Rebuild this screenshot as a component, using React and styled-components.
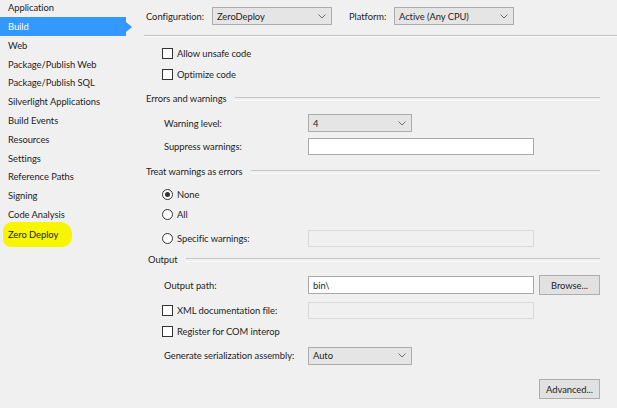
import React from "react";
import styled, { createGlobalStyle } from "styled-components";

const Global = createGlobalStyle`
  html, body { margin: 0; padding: 0; background: #ffffff; }
  body { font-family: "Segoe UI", Lato, "Liberation Sans", sans-serif; font-size: 9.4px; letter-spacing: -0.05px; color: #1e1e1e; }
  * { box-sizing: border-box; }
`;

const Page = styled.div`
  width: 617px;
  height: 414px;
  display: flex;
  flex-direction: column;
  background: #ffffff;
  overflow: hidden;
`;

const Body = styled.div`
  height: 408px;
  display: flex;
  background: #f0f0f0;
`;

const Sidebar = styled.nav`
  width: 133px;
  flex: none;
  display: flex;
  flex-direction: column;
  margin-top: -1.6px;
`;

const NavItem = styled.div`
  position: relative;
  height: 18.8px;
  width: 126px;
  display: flex;
  align-items: center;
  padding-left: 8px;
  white-space: nowrap;
  color: ${(p) => (p.$active ? "#ffffff" : "#1e1e1e")};
  background: ${(p) => (p.$active ? "#3399ff" : "transparent")};
  ${(p) =>
    p.$active &&
    `
    &::after {
      content: "";
      position: absolute;
      right: -6px;
      top: 50%;
      margin-top: -5px;
      border-left: 6px solid #3399ff;
      border-top: 5px solid transparent;
      border-bottom: 5px solid transparent;
    }
  `}
`;

const Highlight = styled.span`
  background: #f7f500;
  padding: 7px 14px 7px 5px;
  margin-left: -5px;
  border-radius: 9px 12px 10px 8px;
`;

const Main = styled.main`
  flex: 1;
  display: flex;
  flex-direction: column;
`;

const TopBar = styled.div`
  height: 18px;
  margin-top: 7px;
  display: flex;
  align-items: center;
  padding-left: 13px;
`;

const TopLabel = styled.span`
  width: ${(p) => p.$w}px;
  flex: none;
  margin-left: ${(p) => p.$ml || 0}px;
`;

const Separator = styled.div`
  margin-top: 10px;
  height: 2px;
  border-top: 1px solid #c6c6c6;
  border-bottom: 1px solid #fafafa;
  margin-left: 11px;
`;

const Row = styled.div`
  height: ${(p) => p.$h || 17}px;
  margin-top: ${(p) => p.$mt}px;
  display: flex;
  align-items: center;
  padding-left: ${(p) => p.$pl || 29}px;
  white-space: nowrap;
`;

const Label = styled.span`
  width: ${(p) => p.$w}px;
  flex: none;
`;

const Heading = styled.div`
  height: 17px;
  margin-top: ${(p) => p.$mt}px;
  display: flex;
  align-items: center;
  padding-left: ${(p) => p.$pl || 13}px;
  width: 467px;
  white-space: nowrap;
  &::after {
    content: "";
    flex: 1;
    margin-left: 8px;
    height: 2px;
    border-top: 1px solid #c6c6c6;
    border-bottom: 1px solid #fafafa;
  }
`;

const SelectBox = styled.div`
  width: ${(p) => p.$w}px;
  height: ${(p) => p.$h || 18}px;
  flex: none;
  display: flex;
  align-items: center;
  justify-content: space-between;
  padding: 0 5px 0 4px;
  background: #e5e5e5;
  border: 1px solid #acacac;
  color: #1e1e1e;
`;

const TextBox = styled.div`
  width: ${(p) => p.$w || 226}px;
  height: ${(p) => p.$h || 17}px;
  flex: none;
  display: flex;
  align-items: center;
  padding-left: 4px;
  background: ${(p) => (p.$disabled ? "#f0f0f0" : "#ffffff")};
  border: 1px solid ${(p) => (p.$disabled ? "#d9d9d9" : "#a9a9a9")};
`;

const Button = styled.div`
  width: 61px;
  height: 20px;
  flex: none;
  margin-left: ${(p) => p.$ml || 0}px;
  display: flex;
  align-items: center;
  justify-content: center;
  background: #e1e1e1;
  border: 1px solid #adadad;
`;

const Box = styled.span`
  width: 11px;
  height: 11px;
  flex: none;
  border: 1px solid #333333;
  background: #ffffff;
  margin-right: 4px;
`;

const Radio = styled.span`
  width: 11px;
  height: 11px;
  flex: none;
  border: 1px solid #333333;
  border-radius: 50%;
  background: #ffffff;
  margin-right: 4px;
  display: flex;
  align-items: center;
  justify-content: center;
  &::after {
    content: "";
    width: 5px;
    height: 5px;
    border-radius: 50%;
    background: ${(p) => (p.$checked ? "#333333" : "transparent")};
  }
`;

const CheckLabel = styled.span`
  width: ${(p) => (p.$w ? `${p.$w}px` : "auto")};
  flex: none;
`;

const Chevron = () => (
  <svg width="8" height="5" viewBox="0 0 8 5">
    <polyline points="0.5,0.5 4,4 7.5,0.5" fill="none" stroke="#707070" strokeWidth="1" />
  </svg>
);

const Select = ({ w, value }) => (
  <SelectBox $w={w}>
    <span>{value}</span>
    <Chevron />
  </SelectBox>
);

const navItems = [
  "Application",
  "Build",
  "Web",
  "Package/Publish Web",
  "Package/Publish SQL",
  "Silverlight Applications",
  "Build Events",
  "Resources",
  "Settings",
  "Reference Paths",
  "Signing",
  "Code Analysis",
];

export default function App() {
  return (
    <>
      <Global />
      <Page>
        <Body>
          <Sidebar>
            {navItems.map((n) => (
              <NavItem key={n} $active={n === "Build"}>
                {n}
              </NavItem>
            ))}
            <NavItem style={{ marginTop: 1 }}>
              <Highlight>Zero Deploy</Highlight>
            </NavItem>
          </Sidebar>
          <Main>
            <TopBar>
              <TopLabel $w={66}>Configuration:</TopLabel>
              <Select w={120} value="ZeroDeploy" />
              <TopLabel $w={45} $ml={17}>Platform:</TopLabel>
              <Select w={120} value="Active (Any CPU)" />
            </TopBar>
            <Separator />
            <Row $mt={8} $pl={29}>
              <Box />
              <CheckLabel>Allow unsafe code</CheckLabel>
            </Row>
            <Row $mt={4} $pl={29}>
              <Box />
              <CheckLabel>Optimize code</CheckLabel>
            </Row>
            <Heading $mt={7}>Errors and warnings</Heading>
            <Row $mt={7} $h={18} $pl={31}>
              <Label $w={144}>Warning level:</Label>
              <Select w={104} value="4" />
            </Row>
            <Row $mt={6} $pl={31}>
              <Label $w={144}>Suppress warnings:</Label>
              <TextBox />
            </Row>
            <Heading $mt={8}>Treat warnings as errors</Heading>
            <Row $mt={6} $pl={29}>
              <Radio $checked />
              <CheckLabel>None</CheckLabel>
            </Row>
            <Row $mt={3} $pl={29}>
              <Radio />
              <CheckLabel>All</CheckLabel>
            </Row>
            <Row $mt={7} $pl={29}>
              <Radio />
              <CheckLabel $w={131}>Specific warnings:</CheckLabel>
              <TextBox $disabled />
            </Row>
            <Heading $mt={4} $pl={15}>Output</Heading>
            <Row $mt={7} $h={20} $pl={31}>
              <Label $w={144}>Output path:</Label>
              <TextBox $h={18}>bin\</TextBox>
              <Button $ml={5}>Browse...</Button>
            </Row>
            <Row $mt={7} $pl={29}>
              <Box />
              <CheckLabel $w={131}>XML documentation file:</CheckLabel>
              <TextBox $disabled />
            </Row>
            <Row $mt={4} $pl={29}>
              <Box />
              <CheckLabel>Register for COM interop</CheckLabel>
            </Row>
            <Row $mt={7} $pl={31}>
              <Label $w={144}>Generate serialization assembly:</Label>
              <Select w={104} value="Auto" />
            </Row>
            <Row $mt={15} $h={20} $pl={406}>
              <Button>Advanced...</Button>
            </Row>
          </Main>
        </Body>
      </Page>
    </>
  );
}
